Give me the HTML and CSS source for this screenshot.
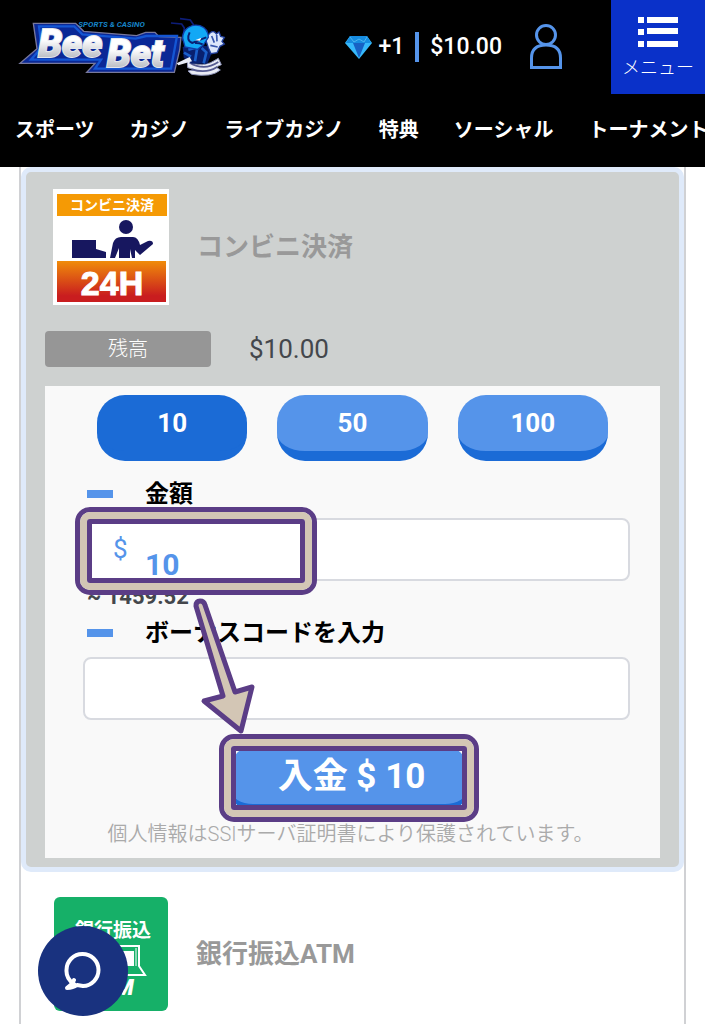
FILE: index.html
```html
<!DOCTYPE html>
<html lang="ja">
<head>
<meta charset="UTF-8">
<meta name="viewport" content="width=device-width, initial-scale=1.0">
<title>BeeBet</title>
<link rel="stylesheet" href="styles.css">
</head>
<body>

<!-- Header -->
<header class="header">
  <div class="topbar">
    <a href="#" class="logo" aria-label="BeeBet">
      <svg viewBox="0 0 660 225" width="220" height="75">
        <defs>
          <linearGradient id="silver" x1="0" y1="0" x2="0" y2="1">
            <stop offset="0.4" stop-color="#fff"/>
            <stop offset="0.85" stop-color="#b4b8c0"/>
          </linearGradient>
        </defs>
        <path d="M55 40H182L206 64L365 77L392 67H420L432 80L498 82L494 120L478 187H215L240 160H15L66 116Z" fill="#0a2896" stroke="#77789c" stroke-width="4"/>
        <path d="M72 49H178L202 73L362 86L394 78H486L468 176H240L258 149H48L80 112Z" fill="none" stroke="#1456d4" stroke-width="7"/>
        <text x="190" y="52" class="logo-small">SPORTS &amp; CASINO</text>
        <text x="70" y="141" class="logo-text">Bee</text>
        <text x="276" y="170" class="logo-text">Bet</text>
        <!-- bee mascot -->
        <path d="M468 39L500 42L508 54L503 92M495 26L526 30L540 51" fill="none" stroke="#0d1d78" stroke-width="5"/>
        <path d="M517 150Q560 181 610 145L619 164L603 171L616 180Q590 203 530 193L519 183L540 179L518 173Z" fill="#e9ecf5" stroke="#8d93b8" stroke-width="3"/>
        <path d="M524 158Q568 184 610 156M530 178Q574 192 606 171" fill="none" stroke="#555b91" stroke-width="5"/>
        <path d="M503 111L533 103L575 108L590 130L577 161H530L506 143Z" fill="#08206f"/>
        <path d="M520 119L547 112L540 154M560 114L574 127L566 160M507 128L528 140" fill="none" stroke="#1a5fca" stroke-width="8"/>
        <path d="M485 160L524 141L531 154L490 166Z" fill="#e9ecf5"/>
        <path d="M571 85L586 68Q596 60 604 72L612 66L617 79L628 82L621 94L628 102L615 109L606 128L588 131L580 113Z" fill="#dce7fb" stroke="#213f9c" stroke-width="4"/>
        <path d="M590 78L598 98M605 75L606 94M586 106L608 111" fill="none" stroke="#3757ad" stroke-width="5"/>
        <path d="M503 84C503 56 530 40 555 47Q580 56 580 82L566 104L548 118L510 111Z" fill="#12a8f5" stroke="#103da8" stroke-width="4"/>
        <path d="M524 67Q512 91 532 99L556 89L574 82M540 99Q551 98 563 103" fill="none" stroke="#092074" stroke-width="6"/>
        <path d="M540 91L559 83L555 92Z" fill="#fff"/>
      </svg>
    </a>
    <div class="account">
      <svg class="diamond" viewBox="0 0 27 23" width="27" height="23">
        <path d="M5 0H22L27 7L14 23L0 7Z" fill="#36b9fb"/>
        <path d="M5 0H22L26 7H1Z" fill="#168ce0"/>
        <path d="M8 7H20L14 22Z" fill="#1761c4"/>
        <path d="M5 1L9 6L14 3L19 6L22 1" fill="none" stroke="#4db4ee" stroke-width="1"/>
      </svg>
      <span class="points">+1</span>
      <span class="balance">$10.00</span>
      <a href="#" class="user" aria-label="User">
        <svg viewBox="0 0 32 46" width="32" height="46">
          <circle cx="16" cy="11" r="9.5" fill="none" stroke="#5594ea" stroke-width="3"/>
          <path d="M1.5 43.5V34C1.5 25 7 21 16 21S30.5 25 30.5 34V43.5Z" fill="none" stroke="#5594ea" stroke-width="3"/>
        </svg>
      </a>
    </div>
    <button type="button" class="menu-button">
      <svg viewBox="0 0 40 30" width="40" height="30">
        <path d="M0 0H6V6H0ZM9 0H40V6H9ZM0 12H6V18H0ZM9 11H40V17H9ZM0 24H6V30H0ZM9 24H40V30H9Z" fill="#fff"/>
      </svg>
      <span>メニュー</span>
    </button>
  </div>
  <nav class="nav">
    <a href="#">スポーツ</a>
    <a href="#">カジノ</a>
    <a href="#">ライブカジノ</a>
    <a href="#">特典</a>
    <a href="#">ソーシャル</a>
    <a href="#">トーナメント</a>
  </nav>
</header>

<!-- Payment methods -->
<main class="methods">
  <section class="card">
    <div class="card-head">
      <svg class="card-logo" viewBox="0 0 116 116" width="116" height="116">
        <defs>
          <linearGradient id="fire" x1="0" y1="0" x2="0" y2="1">
            <stop offset="0" stop-color="#f08c0a"/>
            <stop offset="0.85" stop-color="#c91d1f"/>
          </linearGradient>
        </defs>
        <rect width="116" height="116" fill="#fff"/>
        <rect x="4" y="5" width="110" height="22" fill="#f59a05"/>
        <text x="59" y="21" class="konbini-text">コンビニ決済</text>
        <path d="M19 51H43V60L53 63V69H19Z" fill="#17175f"/>
        <circle cx="73" cy="38" r="7" fill="#17175f"/>
        <path d="M57 69L60 54Q62 48 68 48H80Q85 48 87 56L95 52Q100 51 100 55L87 66L82 61V69H79L77 60V69H66V59L62 69Z" fill="#17175f"/>
        <rect x="4" y="72" width="109" height="41" fill="url(#fire)"/>
        <text x="59" y="106" class="hours-text">24H</text>
      </svg>
      <h2>コンビニ決済</h2>
    </div>
    <div class="balance-row">
      <span class="balance-label">残高</span>
      <span class="balance-value">$10.00</span>
    </div>

    <form class="panel">
      <div class="amounts">
        <button type="button" class="amount active">10</button>
        <button type="button" class="amount">50</button>
        <button type="button" class="amount">100</button>
      </div>

      <label class="field-label" for="amount">金額</label>
      <div class="field">
        <span class="currency">$</span>
        <input type="text" id="amount" class="amount-input" value="10">
        <div class="highlight highlight-amount"></div>
      </div>
      <p class="rate">~ 1459.52</p>

      <label class="field-label" for="bonus">ボーナスコードを入力</label>
      <div class="field">
        <input type="text" id="bonus">
      </div>

      <div class="submit-row">
        <button type="button" class="submit">入金 $ 10</button>
        <div class="highlight highlight-submit"></div>
      </div>
      <p class="note">個人情報はSSIサーバ証明書により保護されています。</p>

      <svg class="arrow" viewBox="0 0 64 138" width="64" height="138">
        <path d="M4 8Q4 3 8 3Q12 3 13 7L43 94L60 89L49 133L12 103L31 98Z" fill="#d3c6b5" stroke="#5b3d86" stroke-width="5" stroke-linejoin="round"/>
      </svg>
    </form>
  </section>

  <section class="bank">
    <svg class="bank-logo" viewBox="0 0 114 114" width="114" height="114">
      <rect width="114" height="114" rx="6" fill="#16b068"/>
      <text x="59" y="40" class="bank-text">銀行振込</text>
      <path d="M26 49H85V69L91 78H22L28 69V49" fill="none" stroke="#fff" stroke-width="2"/>
      <rect x="32" y="54" width="48" height="15" fill="#fff"/>
      <path d="M82 51V69" stroke="#fff" stroke-width="1"/>
      <text x="57" y="98" class="atm-text">ATM</text>
    </svg>
    <h2>銀行振込ATM</h2>
  </section>
</main>

<!-- Chat button -->
<button type="button" class="chat" aria-label="Chat">
  <svg viewBox="0 0 38 40" width="38" height="40">
    <path d="M10 33Q2 28 2.5 19A16 16 0 1 1 19 35L13 34Q9 37 3 37Q8 34 10 29" fill="none" stroke="#fff" stroke-width="4" stroke-linecap="round" stroke-linejoin="round"/>
  </svg>
</button>

</body>
</html>
```
FILE: styles.css
```css
* {
  box-sizing: border-box;
}

body {
  margin: 0;
  background-color: #fff;
  font-family: Roboto, "Noto Sans CJK JP", sans-serif;
  color: #44474c;
}

button,
input {
  font-family: inherit;
}

button {
  border: none;
  padding: 0;
  cursor: pointer;
}

h2,
p {
  margin: 0;
}

/* Header */
.header {
  background-color: #000;
  color: #fff;
}

.topbar {
  display: flex;
  height: 94px;
}

.logo {
  margin: 10px 0 0 15px;
}

.logo-text {
  font: italic 900 114px Roboto, sans-serif;
  fill: url(#silver);
  stroke: #e4e6ec;
  stroke-width: 6px;
  paint-order: stroke;
}

.logo-small {
  font: italic 700 24px Roboto, sans-serif;
  fill: #1682c4;
}

.account {
  display: flex;
  align-items: center;
  margin-left: auto;
  font-size: 23px;
  font-weight: 500;
  line-height: 30px;
}

.points {
  margin-left: 6px;
  padding-right: 11px;
  border-right: 4px solid #5594ea;
}

.balance {
  margin-left: 11px;
}

.user {
  display: flex;
  margin: 0 49px 0 28px;
}

.menu-button {
  display: flex;
  flex-direction: column;
  align-items: center;
  width: 94px;
  padding-top: 17px;
  background-color: #0a31c9;
  color: #fff;
  font-size: 18px;
  font-weight: 300;
  line-height: 42px;
}

/* Navigation bar */
.nav {
  display: flex;
  gap: 35px;
  height: 73px;
  padding-left: 15px;
  overflow: hidden;
}

.nav a {
  flex-shrink: 0;
  color: #fff;
  font-size: 20px;
  font-weight: 700;
  line-height: 72px;
  text-decoration: none;
}

/* Payment methods */
.methods {
  min-height: calc(100vh - 167px);
  margin: 0 19px;
  border: solid #d0d1d4;
  border-width: 0 2px;
}

.methods h2 {
  color: #999;
  font-size: 26px;
  font-weight: 700;
  line-height: 36px;
}

.card {
  padding: 17px 19px 9px;
  border: 5px solid #dfeafa;
  border-radius: 10px;
  background-color: #ced1d0;
}

.card-head {
  display: flex;
  align-items: center;
  gap: 28px;
  padding-left: 8px;
}

.konbini-text {
  font: 700 14px "Noto Sans CJK JP", sans-serif;
  fill: #fff;
  text-anchor: middle;
}

.hours-text {
  font: 700 34px "Liberation Sans", sans-serif;
  fill: #fff;
  stroke: #fff;
  stroke-width: 1px;
  text-anchor: middle;
}

.balance-row {
  display: flex;
  align-items: center;
  gap: 38px;
  margin: 26px 0 19px;
}

.balance-label {
  width: 166px;
  border-radius: 4px;
  background-color: #969696;
  color: #fff;
  font-size: 20px;
  font-weight: 300;
  line-height: 36px;
  text-align: center;
}

.balance-value {
  font-size: 26px;
}

/* Deposit form */
.panel {
  position: relative;
  padding: 9px 30px 9px 38px;
  background-color: #f9f9f9;
}

.amounts {
  display: flex;
  gap: 30px;
  padding: 0 22px 0 14px;
}

.amount {
  flex: 1;
  height: 66px;
  border-bottom: 10px solid #1b6bd6;
  border-radius: 28px;
  background-color: #5594ea;
  color: #fff;
  font-size: 26px;
  font-weight: 700;
}

.amount.active {
  background-color: #1b6bd6;
}

.field-label {
  display: flex;
  align-items: center;
  gap: 32px;
  padding-left: 4px;
  color: #000;
  font-size: 24px;
  font-weight: 700;
  line-height: 48px;
}

.field-label::before {
  content: "";
  width: 26px;
  height: 8px;
  background-color: #5594ea;
}

.amounts + .field-label {
  margin-top: 9px;
}

.field {
  position: relative;
}

.field input {
  display: block;
  width: 100%;
  height: 63px;
  border: 2px solid #d8dae0;
  border-radius: 8px;
  background-color: #fff;
}

.field .amount-input {
  padding: 30px 20px 0 60px;
  color: #5594ea;
  font-size: 30px;
  font-weight: 700;
}

.currency {
  position: absolute;
  top: 14px;
  left: 30px;
  color: #5594ea;
  font-size: 26px;
  line-height: 34px;
}

.rate {
  padding: 4px 0 0 4px;
  font-size: 22px;
  font-weight: 700;
  line-height: 24px;
}

.submit-row {
  display: flex;
  justify-content: center;
  position: relative;
  margin: 26px 16px 8px 0;
}

.submit {
  width: 236px;
  height: 66px;
  padding-left: 6px;
  border-bottom: 8px solid #1b6bd6;
  border-radius: 22px;
  background-color: #5594ea;
  color: #fff;
  font-size: 35px;
  font-weight: 700;
  line-height: 62px;
}

.note {
  padding-right: 12px;
  color: #aaa;
  font-size: 20px;
  font-weight: 350;
  line-height: 29px;
  text-align: center;
}

/* Highlight frames and arrow */
.highlight {
  position: absolute;
  border: 5px solid #5b3d86;
  border-radius: 15px;
  pointer-events: none;
}

.highlight::before,
.highlight::after {
  content: "";
  position: absolute;
}

.highlight::before {
  inset: 0;
  border: 7px solid #d3c6b5;
  border-radius: 10px;
}

.highlight::after {
  inset: 7px;
  border: 5px solid #5b3d86;
  border-radius: 3px;
}

.highlight-amount {
  top: -11px;
  left: -8px;
  width: 242px;
  height: 88px;
}

.highlight-submit {
  top: -12px;
  left: calc(50% - 130px);
  width: 260px;
  height: 88px;
}

.arrow {
  position: absolute;
  top: 212px;
  left: 147px;
}

/* Bank transfer */
.bank {
  display: flex;
  align-items: center;
  gap: 28px;
  padding: 25px 33px 13px;
}

.bank-text {
  font: 700 19px "Noto Sans CJK JP", sans-serif;
  fill: #fff;
  text-anchor: middle;
}

.atm-text {
  font: italic 900 22px Roboto, sans-serif;
  fill: #fff;
  text-anchor: middle;
}

/* Chat button */
.chat {
  display: flex;
  justify-content: center;
  align-items: center;
  position: fixed;
  bottom: 8px;
  left: 38px;
  width: 90px;
  height: 90px;
  border-radius: 50%;
  background-color: #19327f;
}
```
